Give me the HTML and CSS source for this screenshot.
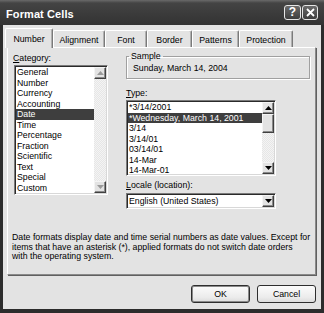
FILE: index.html
```html
<!DOCTYPE html>
<html lang="en">
<head>
    <meta charset="UTF-8">
    <title>Format Cells</title>
    <link rel="stylesheet" href="styles.css">
</head>
<body>

<div class="window">
    <div class="titlebar">
        <span class="title">Format Cells</span>
        <div class="caption-buttons">
            <span class="cap-btn help">?</span>
            <span class="cap-btn close">
                <svg width="9" height="9" viewBox="0 0 9 9"><path d="M1 1L8 8M8 1L1 8" stroke="#fff" stroke-width="1.8"/></svg>
            </span>
        </div>
    </div>

    <div class="client">
        <div class="tabs">
            <div class="tab active">Number</div>
            <div class="tab">Alignment</div>
            <div class="tab">Font</div>
            <div class="tab">Border</div>
            <div class="tab">Patterns</div>
            <div class="tab">Protection</div>
        </div>

        <div class="panel">
            <div class="columns">
                <div class="col-left">
                    <div class="label"><u>C</u>ategory:</div>
                    <div class="listbox category">
                        <ul class="items">
                            <li>General</li>
                            <li>Number</li>
                            <li>Currency</li>
                            <li>Accounting</li>
                            <li class="selected">Date</li>
                            <li>Time</li>
                            <li>Percentage</li>
                            <li>Fraction</li>
                            <li>Scientific</li>
                            <li>Text</li>
                            <li>Special</li>
                            <li>Custom</li>
                        </ul>
                        <div class="vscroll disabled">
                            <span class="arrow"><svg width="7" height="4" viewBox="0 0 7 4"><path d="M3.5 0L7 4H0z"/></svg></span>
                            <span class="track"></span>
                            <span class="arrow"><svg width="7" height="4" viewBox="0 0 7 4"><path d="M0 0H7L3.5 4z"/></svg></span>
                        </div>
                    </div>
                </div>

                <div class="col-right">
                    <fieldset class="sample">
                        <legend>Sample</legend>
                        Sunday, March 14, 2004
                    </fieldset>

                    <div class="label type-label"><u>T</u>ype:</div>
                    <div class="listbox type">
                        <ul class="items">
                            <li>*3/14/2001</li>
                            <li class="selected">*Wednesday, March 14, 2001</li>
                            <li>3/14</li>
                            <li>3/14/01</li>
                            <li>03/14/01</li>
                            <li>14-Mar</li>
                            <li>14-Mar-01</li>
                        </ul>
                        <div class="vscroll">
                            <span class="arrow"><svg width="7" height="4" viewBox="0 0 7 4"><path d="M3.5 0L7 4H0z"/></svg></span>
                            <span class="track"><span class="thumb"></span></span>
                            <span class="arrow"><svg width="7" height="4" viewBox="0 0 7 4"><path d="M0 0H7L3.5 4z"/></svg></span>
                        </div>
                    </div>

                    <div class="label locale-label"><u>L</u>ocale (location):</div>
                    <div class="combo">
                        <span class="combo-text">English (United States)</span>
                        <span class="arrow"><svg width="7" height="4" viewBox="0 0 7 4"><path d="M0 0H7L3.5 4z"/></svg></span>
                    </div>
                </div>
            </div>

            <p class="desc">Date formats display date and time serial numbers as date values. Except for<br>items that have an asterisk (*), applied formats do not switch date orders<br>with the operating system.</p>
        </div>

        <div class="buttons">
            <button class="default">OK</button>
            <button>Cancel</button>
        </div>
    </div>
</div>

</body>
</html>
```

FILE: styles.css
```css
* {
    box-sizing: border-box;
}

body {
    margin: 0;
    background: #fff;
    font-family: "Liberation Sans", Arial, sans-serif;
    font-size: 8.75px;
    color: #000;
}

.window {
    width: 324px;
    height: 313px;
    background: #2c2c2c;
    display: flex;
    flex-direction: column;
}

/* title bar */

.titlebar {
    height: 25px;
    display: flex;
    align-items: center;
    justify-content: space-between;
    padding: 2px 6px 0 6px;
    background: linear-gradient(#6a6a6a, #444 12%, #3a3a3a 60%, #333);
}

.title {
    color: #fff;
    font-weight: bold;
    font-size: 11px;
    letter-spacing: 0.1px;
}

.caption-buttons {
    display: flex;
    gap: 1px;
    margin-top: -3px;
}

.cap-btn {
    width: 17px;
    height: 15px;
    border: 1px solid #e6e6e6;
    border-radius: 3px;
    background: linear-gradient(#6a6a6a, #3e3e3e);
    color: #fff;
    display: flex;
    align-items: center;
    justify-content: center;
    font-weight: bold;
    font-size: 12px;
}

.cap-btn.close {
    width: 16px;
}

/* client area */

.client {
    flex: 1;
    margin: 0 3px 4px 3px;
    background: #e3e3e3;
    padding: 3px 5px 0 2px;
}

.tabs {
    display: flex;
    align-items: flex-end;
    height: 19px;
    position: relative;
    z-index: 1;
}

.tab {
    height: 17px;
    line-height: 16px;
    padding-top: 1px;
    text-align: center;
    border-top: 1px solid #fff;
    border-left: 1px solid #fff;
    border-right: 1px solid #7a7a7a;
    border-radius: 2px 2px 0 0;
    box-shadow: inset -1px 0 #b0b0b0;
    background: #e3e3e3;
}

.tab:nth-child(1) { width: 48px; }
.tab:nth-child(2) { width: 52px; }
.tab:nth-child(3) { width: 42px; }
.tab:nth-child(4) { width: 45px; }
.tab:nth-child(5) { width: 47px; }
.tab:nth-child(6) { width: 54px; }

.tab.active {
    height: 20px;
    line-height: 17px;
    padding-top: 2px;
    margin-bottom: -1px;
}

.panel {
    margin-left: 2px;
    width: 309px;
    height: 228px;
    border-top: 1px solid #fff;
    border-left: 1px solid #fff;
    border-right: 1px solid #8a8a8a;
    border-bottom: 1px solid #8a8a8a;
    box-shadow: 1px 1px 0 #606060;
}

.columns {
    display: flex;
    padding-left: 5px;
}

.col-left {
    width: 113px;
}

.col-right {
    width: 186px;
}

.label {
    height: 12px;
    line-height: 12px;
    margin-top: 4px;
}

/* list boxes */

.listbox {
    display: flex;
    background: #fff;
    border-top: 1px solid #7a7a7a;
    border-left: 1px solid #7a7a7a;
    border-right: 1px solid #fff;
    border-bottom: 1px solid #fff;
    box-shadow: inset 1px 1px #2a2a2a, inset -1px -1px #d8d8d8;
    padding: 1px 1px 0 1px;
    overflow: hidden;
}

.listbox.category {
    margin: 1px 0 0 1px;
    width: 94px;
    height: 130px;
}

.listbox.type {
    margin-top: 1px;
    width: 150px;
    height: 76px;
}

.items {
    list-style: none;
    margin: 0;
    padding: 0;
    flex: 1;
    overflow: hidden;
}

.items li {
    height: 10.55px;
    line-height: 10.55px;
    padding-left: 1px;
    white-space: nowrap;
}

.items li.selected {
    background: #3e3e3e;
    color: #fff;
}

.vscroll {
    width: 12px;
    display: flex;
    flex-direction: column;
    margin-bottom: 1px;
}

.vscroll .track {
    flex: 1;
    background: repeating-conic-gradient(#f4f4f4 0 25%, #e6e6e6 0 50%) 0 0 / 2px 2px;
}

.arrow {
    height: 12px;
    flex: none;
    display: flex;
    align-items: center;
    justify-content: center;
    background: #e3e3e3;
    border-top: 1px solid #f4f4f4;
    border-left: 1px solid #f4f4f4;
    border-right: 1px solid #404040;
    border-bottom: 1px solid #404040;
    box-shadow: inset -1px -1px #8a8a8a;
}

.arrow svg {
    fill: #000;
}

.vscroll.disabled .arrow svg {
    fill: #9a9a9a;
}

.thumb {
    display: block;
    height: 19px;
    background: #e3e3e3;
    border-top: 1px solid #f4f4f4;
    border-left: 1px solid #f4f4f4;
    border-right: 1px solid #404040;
    border-bottom: 1px solid #404040;
    box-shadow: inset -1px -1px #8a8a8a;
}

/* sample group */

.sample {
    margin: 2px 0 0 0;
    width: 184px;
    height: 29px;
    padding: 0 6px 2px 6px;
    border: 1px solid #a0a0a0;
    box-shadow: inset 1px 1px #fff, 1px 1px #fff;
    line-height: 12px;
}

.sample legend {
    padding: 0 2px;
    margin-left: -4px;
    line-height: 12px;
}

.type-label {
    margin-top: 8px;
}

.locale-label {
    margin-top: 3px;
}

/* combo */

.combo {
    margin-top: 2px;
    width: 150px;
    height: 16px;
    display: flex;
    align-items: center;
    background: #fff;
    border-top: 1px solid #7a7a7a;
    border-left: 1px solid #7a7a7a;
    border-right: 1px solid #fff;
    border-bottom: 1px solid #fff;
    box-shadow: inset 1px 1px #2a2a2a, inset -1px -1px #d8d8d8;
    padding: 1px 1px 1px 2px;
}

.combo-text {
    flex: 1;
}

.combo .arrow {
    width: 12px;
    height: 12px;
}

.desc {
    margin: 24px 0 0 4px;
    line-height: 9.6px;
    white-space: nowrap;
}

/* buttons */

.buttons {
    display: flex;
    justify-content: flex-end;
    gap: 7px;
    margin-top: 10px;
}

button {
    width: 59px;
    height: 18px;
    font-family: inherit;
    font-size: 8.75px;
    color: #000;
    background: linear-gradient(#fbfbfb, #ececec 70%, #dcdcdc);
    border: 1px solid #2e2e2e;
    border-radius: 3px;
    padding: 0;
}

button.default {
    box-shadow: inset 0 0 0 1px #8a8a8a;
}
```
